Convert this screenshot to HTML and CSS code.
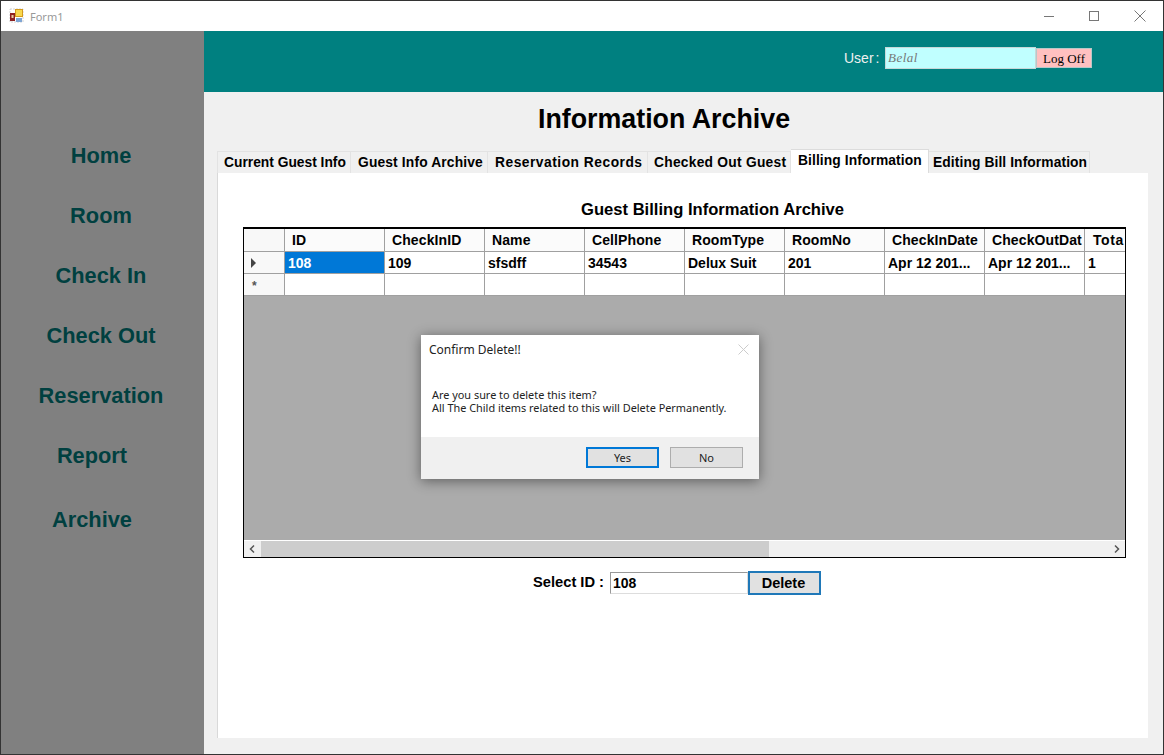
FILE: index.html
```html
<!DOCTYPE html>
<html lang="en">
<head>
  <meta charset="UTF-8" />
  <title>Form1</title>
  <link rel="stylesheet" href="styles.css">
</head>
<body>
  <div class="window">
    <div class="titlebar">
      <svg class="app-icon" width="16" height="16" viewBox="0 0 16 16">
        <rect x="1" y="1" width="13" height="13" fill="#fff" stroke="#b5b5b5" stroke-width="0.6" stroke-dasharray="2 1"/>
        <rect x="1" y="5" width="5" height="8" fill="#8e2020"/>
        <rect x="2.5" y="7" width="2" height="3" fill="#e9c9a0"/>
        <rect x="6" y="1" width="8" height="8" fill="#d49a1c"/>
        <rect x="7" y="2" width="6" height="6" fill="#f8d84e"/>
        <rect x="7" y="10" width="6" height="4" fill="#7fa5d4"/>
      </svg>
      <span class="title-text">Form1</span>
      <div class="controls">
        <svg width="12" height="12" viewBox="0 0 12 12"><path d="M1 6.5H11" stroke="#777" fill="none"/></svg>
        <svg class="ctl-max" width="12" height="12" viewBox="0 0 12 12"><rect x="1.5" y="1.5" width="9" height="9" stroke="#777" fill="none"/></svg>
        <svg width="12" height="12" viewBox="0 0 12 12"><path d="M.5 .5L11.5 11.5M11.5 .5L.5 11.5" stroke="#777" fill="none"/></svg>
      </div>
    </div>

    <div class="main">
      <div class="sidebar">
        <a class="nav-item">Home</a>
        <a class="nav-item">Room</a>
        <a class="nav-item">Check In</a>
        <a class="nav-item">Check Out</a>
        <a class="nav-item">Reservation</a>
        <a class="nav-item nav-short">Report</a>
        <a class="nav-item nav-short nav-last">Archive</a>
      </div>

      <div class="right">
        <div class="header">
          <span class="user-label">User :</span>
          <input class="user-input" type="text" value="Belal" />
          <button class="logoff" type="button">Log Off</button>
        </div>

        <div class="content">
          <h1>Information Archive</h1>
          <div class="tabs">
            <div class="tab tab-1">Current Guest Info</div>
            <div class="tab tab-2">Guest Info Archive</div>
            <div class="tab tab-3">Reservation Records</div>
            <div class="tab tab-4">Checked Out Guest</div>
            <div class="tab tab-5 active">Billing Information</div>
            <div class="tab tab-6">Editing Bill Information</div>
          </div>
          <div class="tab-page">
            <h2>Guest Billing Information Archive</h2>
            <div class="grid">
              <div class="grid-body">
                <table>
                  <thead>
                    <tr>
                      <th class="row-head"></th>
                      <th>ID</th>
                      <th>CheckInID</th>
                      <th>Name</th>
                      <th>CellPhone</th>
                      <th>RoomType</th>
                      <th>RoomNo</th>
                      <th>CheckInDate</th>
                      <th>CheckOutDat</th>
                      <th class="last-col">Tota</th>
                    </tr>
                  </thead>
                  <tbody>
                    <tr>
                      <td class="row-head"><span class="current-row"></span></td>
                      <td class="selected">108</td>
                      <td>109</td>
                      <td>sfsdff</td>
                      <td>34543</td>
                      <td>Delux Suit</td>
                      <td>201</td>
                      <td>Apr 12 201...</td>
                      <td>Apr 12 201...</td>
                      <td>1</td>
                    </tr>
                    <tr>
                      <td class="row-head"><span class="new-row">*</span></td>
                      <td></td><td></td><td></td><td></td><td></td><td></td><td></td><td></td><td></td>
                    </tr>
                  </tbody>
                </table>
              </div>
              <div class="scrollbar">
                <svg width="17" height="16" viewBox="0 0 17 16"><path d="M10 4.5L6.5 8L10 11.5" stroke="#555" stroke-width="1.5" fill="none"/></svg>
                <div class="scroll-track"><div class="scroll-thumb"></div></div>
                <svg width="17" height="16" viewBox="0 0 17 16"><path d="M7 4.5L10.5 8L7 11.5" stroke="#555" stroke-width="1.5" fill="none"/></svg>
              </div>
            </div>
            <div class="select-row">
              <label>Select ID :</label>
              <input class="id-input" type="text" value="108" />
              <button class="delete" type="button">Delete</button>
            </div>
          </div>
        </div>
      </div>
    </div>

    <div class="dialog">
      <div class="dialog-top">
        <div class="dialog-title">
          <span>Confirm Delete!!</span>
          <svg width="11" height="11" viewBox="0 0 11 11"><path d="M.5 .5L10.5 10.5M10.5 .5L.5 10.5" stroke="#ccc" fill="none"/></svg>
        </div>
        <p>Are you sure to delete this item?<br>All The Child items related to this will Delete Permanently.</p>
      </div>
      <div class="dialog-foot">
        <button class="dlg-btn dlg-default" type="button">Yes</button>
        <button class="dlg-btn" type="button">No</button>
      </div>
    </div>
  </div>
</body>
</html>
```

FILE: styles.css
```css
* {
  box-sizing: border-box;
}
body {
  margin: 0;
  font-family: "Liberation Sans", Arial, sans-serif;
}
.window {
  position: relative;
  width: 1164px;
  height: 755px;
  display: flex;
  flex-direction: column;
  border: 1px solid #333;
  overflow: hidden;
  background-color: white;
}

/* title bar */
.titlebar {
  height: 30px;
  flex: none;
  display: flex;
  align-items: center;
  padding-left: 8px;
  background-color: white;
}
.title-text {
  margin-left: 5px;
  font-family: "Noto Sans", sans-serif;
  font-size: 11px;
  color: #999;
}
.controls {
  margin-left: auto;
  margin-right: 17px;
  display: flex;
  gap: 33px;
}
.ctl-max {
  margin-right: 1px;
}

.main {
  flex: 1;
  display: flex;
  min-height: 0;
}

/* left menu */
.sidebar {
  width: 203px;
  flex: none;
  display: flex;
  flex-direction: column;
  padding-top: 109px;
  padding-right: 3px;
  background-color: #808080;
}
.nav-item {
  height: 60px;
  flex: none;
  line-height: 32px;
  text-align: center;
  font-size: 21.8px;
  font-weight: bold;
  color: #004040;
}
.nav-short {
  padding-right: 18px;
}
.nav-last {
  margin-top: 4px;
}

.right {
  flex: 1;
  display: flex;
  flex-direction: column;
  min-width: 0;
}

/* teal header */
.header {
  height: 61px;
  flex: none;
  display: flex;
  align-items: flex-start;
  padding: 16px 0 0 640px;
  background-color: #008080;
}
.user-label {
  width: 41px;
  line-height: 22px;
  font-size: 14px;
  word-spacing: -2px;
  color: #f0f0f0;
}
.user-input {
  width: 151px;
  height: 22px;
  padding: 0 2px;
  border: 1px solid #c8d8d8;
  background-color: #c0ffff;
  font-family: "Liberation Serif", serif;
  font-size: 13px;
  font-style: italic;
  letter-spacing: 0.5px;
  color: #777;
}
.logoff {
  width: 56px;
  height: 20px;
  margin-top: 1px;
  padding: 1px 0 0 0;
  border: 1px solid #b8c8c8;
  background-color: #ffc0c0;
  font-family: "Liberation Serif", serif;
  font-size: 13px;
  color: black;
}

/* main content */
.content {
  flex: 1;
  display: flex;
  flex-direction: column;
  min-height: 0;
  padding: 0 15px 16px 13px;
  background-color: #f0f0f0;
}
h1 {
  margin: 10px 37px 0 0;
  height: 47px;
  line-height: 34px;
  text-align: center;
  font-size: 26.8px;
}
.tabs {
  height: 24px;
  flex: none;
  display: flex;
  align-items: flex-end;
}
.tab {
  height: 22px;
  padding-left: 7px;
  line-height: 21px;
  font-size: 13.8px;
  font-weight: bold;
  white-space: nowrap;
  background-color: #f0f0f0;
  border: 1px solid #e3e3e3;
  border-bottom: none;
  border-left: none;
}
.tab-1 { width: 134px; padding-left: 6px; border-left: 1px solid #e3e3e3; }
.tab-2 { width: 137px; letter-spacing: 0.15px; }
.tab-3 { width: 160px; letter-spacing: 0.5px; }
.tab-4 { width: 143px; padding-left: 6px; letter-spacing: 0.25px; }
.tab-5 { width: 138px; letter-spacing: 0.1px; }
.tab-6 { width: 161px; padding-left: 4px; letter-spacing: 0.1px; }
.tab.active {
  height: 24px;
  line-height: 22px;
  background-color: white;
  border-color: #dcdcdc;
}
.tab-page {
  flex: 1;
  padding: 27px 0 0 25px;
  background-color: white;
  border-left: 1px solid #d9d9d9;
}
h2 {
  margin: 0 0 7px 0;
  height: 20px;
  padding-left: 338px;
  line-height: 20px;
  font-size: 16.6px;
}

/* data grid */
.grid {
  width: 883px;
  height: 331px;
  display: flex;
  flex-direction: column;
  border: 1px solid black;
  border-top-width: 2px;
  background-color: #ababab;
}
.grid-body {
  flex: 1;
  overflow: hidden;
}
table {
  width: 941px;
  table-layout: fixed;
  border-collapse: separate;
  border-spacing: 0;
  font-size: 14px;
  font-weight: bold;
}
th, td {
  width: 100px;
  padding: 0 0 0 3px;
  overflow: hidden;
  white-space: nowrap;
  text-align: left;
  background-color: white;
  border-right: 1px solid #a0a0a0;
  border-bottom: 1px solid #a0a0a0;
}
th {
  height: 23px;
  padding-left: 7px;
  letter-spacing: 0.1px;
  background-color: #fbfbfb;
}
th.last-col {
  padding-left: 8px;
  letter-spacing: 0.6px;
}
td {
  height: 22px;
}
th.row-head, td.row-head {
  width: 41px;
  padding: 0;
  position: relative;
  background-color: #f8f8f8;
}
td.selected {
  background-color: #0078d7;
  color: white;
}
.current-row {
  display: block;
  width: 0;
  height: 0;
  margin-left: 7px;
  border-left: 5px solid #444;
  border-top: 5px solid transparent;
  border-bottom: 5px solid transparent;
}
.new-row {
  display: block;
  padding-left: 8px;
  font-size: 12px;
  color: #555;
  line-height: 18px;
  height: 15px;
}
.scrollbar {
  height: 17px;
  flex: none;
  display: flex;
  align-items: center;
  border-top: 1px solid #fff;
  background-color: #f0f0f0;
}
.scrollbar svg {
  flex: none;
}
.scroll-track {
  flex: 1;
  height: 100%;
}
.scroll-thumb {
  width: 508px;
  height: 100%;
  background-color: #cdcdcd;
}

/* select row */
.select-row {
  display: flex;
  align-items: center;
  height: 24px;
  margin-top: 13px;
  padding-left: 290px;
}
.select-row label {
  width: 77px;
  font-size: 14.7px;
  font-weight: bold;
  position: relative;
  top: -1px;
}
.id-input {
  width: 138px;
  height: 22px;
  padding: 0 2px;
  border: 1px solid #999;
  border-bottom-color: #ddd;
  border-right-color: #ddd;
  font-family: "Liberation Sans", sans-serif;
  font-size: 14px;
  font-weight: bold;
}
.delete {
  width: 73px;
  height: 24px;
  padding: 0 2px 0 0;
  border: 2px solid #1f78b8;
  background-color: #e1e1e1;
  font-family: "Liberation Sans", sans-serif;
  font-size: 14.5px;
  font-weight: bold;
  color: black;
}

/* confirm box */
.dialog {
  position: absolute;
  left: 420px;
  top: 334px;
  width: 338px;
  height: 144px;
  display: flex;
  flex-direction: column;
  font-family: "Noto Sans", sans-serif;
  font-size: 10.9px;
  color: #222;
  background-color: white;
  box-shadow: 0 2px 12px rgba(0,0,0,0.45);
}
.dialog-top {
  height: 102px;
  flex: none;
}
.dialog-title {
  display: flex;
  justify-content: space-between;
  align-items: center;
  padding: 6px 10px 0 8px;
  font-size: 12px;
}
.dialog p {
  margin: 30px 0 0 11px;
  line-height: 13px;
}
.dialog-foot {
  flex: 1;
  display: flex;
  justify-content: flex-end;
  gap: 11px;
  padding: 10px 16px 0 0;
  background-color: #f0f0f0;
}
.dlg-btn {
  width: 73px;
  height: 21px;
  padding: 0;
  border: 1px solid #adadad;
  background-color: #e1e1e1;
  font-family: "Noto Sans", sans-serif;
  font-size: 11px;
  color: #222;
}
.dlg-default {
  border: 2px solid #0078d7;
}
```
